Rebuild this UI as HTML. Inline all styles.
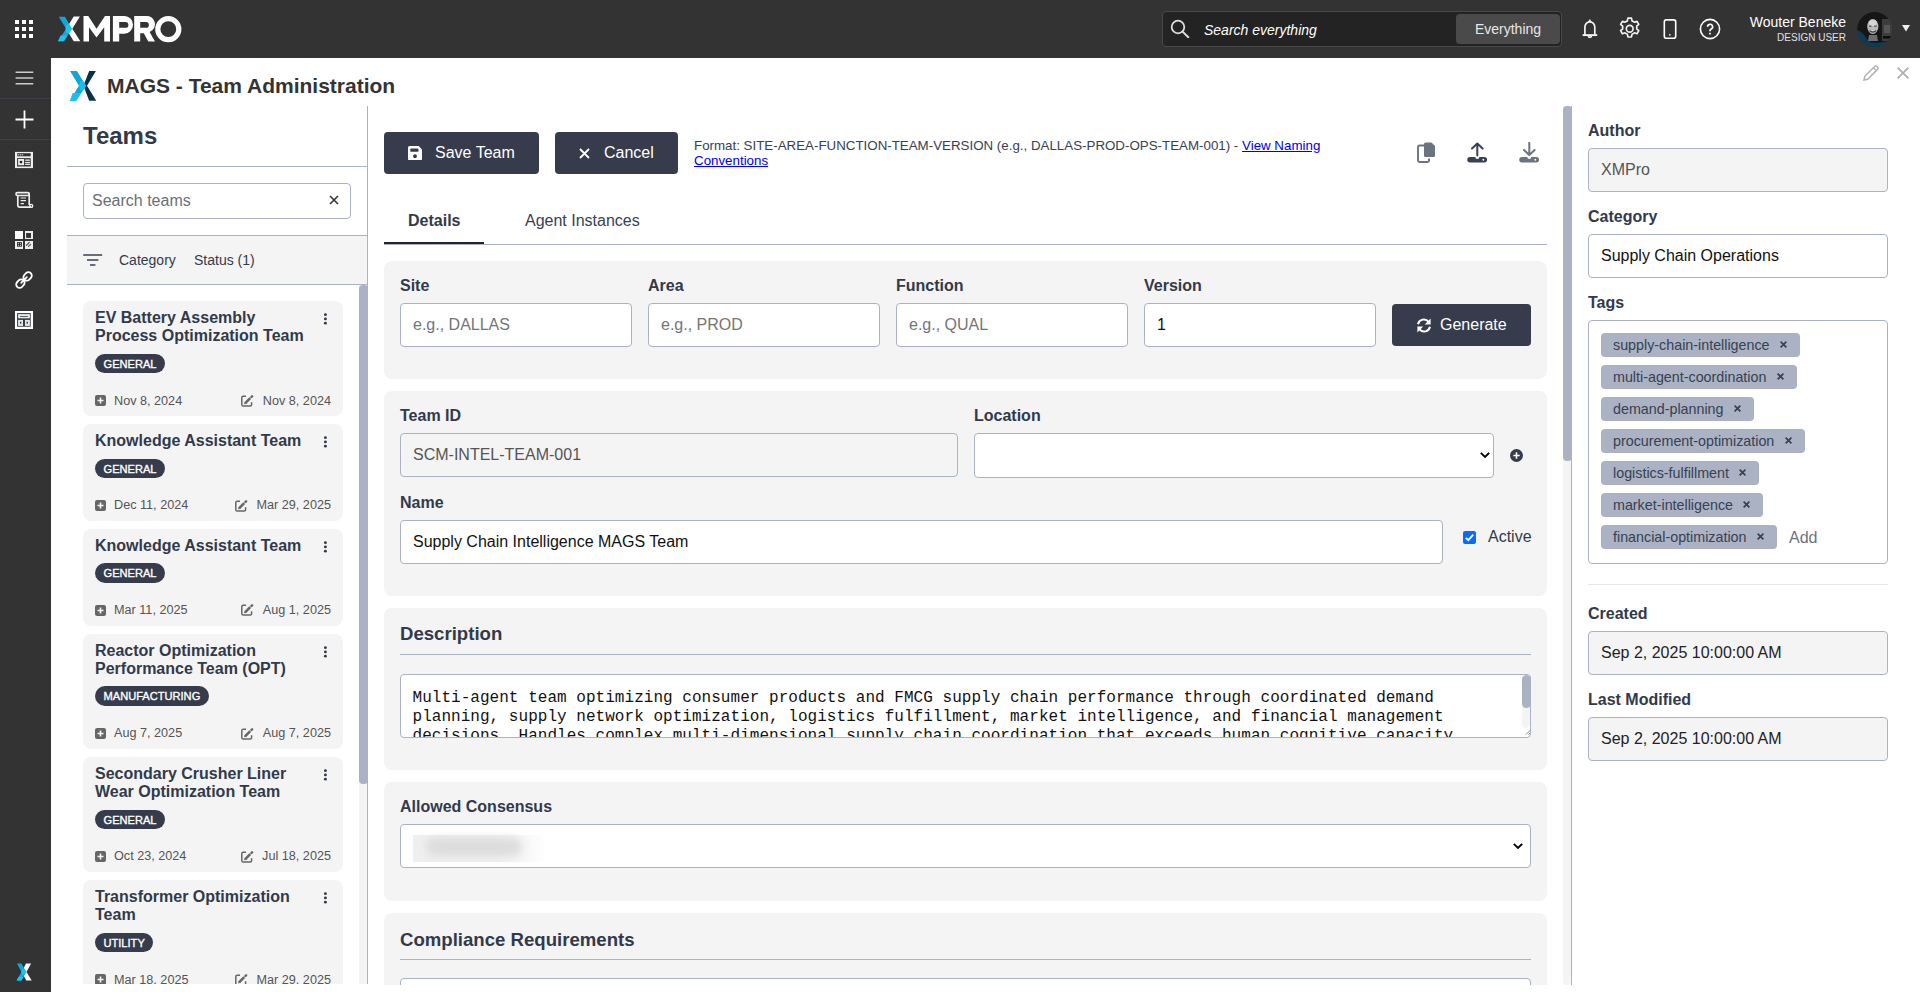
<!DOCTYPE html>
<html><head><meta charset="utf-8">
<style>
*{box-sizing:border-box;margin:0;padding:0}
html,body{width:1920px;height:992px;overflow:hidden;background:#fff;font-family:"Liberation Sans",sans-serif;color:#313a4b}
.abs{position:absolute}
#top{position:absolute;left:0;top:0;width:1920px;height:58px;background:#333}
#side{position:absolute;left:0;top:58px;width:51px;height:934px;background:#333}
.sep{position:absolute;left:0;width:51px;height:1px;background:#3b4048}
.lbl{position:absolute;font-size:16px;font-weight:bold;color:#313a4b;white-space:nowrap;line-height:18px}
.inp{position:absolute;height:44px;border:1px solid #aab2c3;border-radius:4px;background:#fff;font-size:16px;line-height:42px;padding-left:12px;white-space:nowrap;overflow:hidden}
.ph{color:#757575}
.panel{position:absolute;left:384px;width:1163px;background:#f4f4f4;border-radius:8px}
.btn{position:absolute;background:#363c4b;color:#fff;border-radius:4px;font-size:16px;white-space:nowrap}
.card{position:absolute;left:83px;width:260px;background:#f4f4f4;border-radius:8px}
.ct{position:absolute;left:12px;top:8px;width:215px;font-size:16px;font-weight:bold;line-height:18.4px;color:#313a4b}
.badge{position:absolute;left:12px;height:19.5px;border-radius:10px;background:#363c4b;color:#fff;font-size:11.1px;line-height:21px;padding:0 8.5px;-webkit-text-stroke:0.35px #fff;letter-spacing:0px}
.dt{position:absolute;font-size:12.65px;line-height:15px;color:#555;white-space:nowrap;margin-top:-0.1px}
.tag{position:absolute;left:1601px;height:24px;background:#aab2c3;border-radius:4px;font-size:14.3px;line-height:24px;color:#374151;padding-left:12px;white-space:nowrap}
.tag b{position:absolute;top:0;font-size:13px;font-weight:bold}
</style></head><body>

<!-- TOP BAR -->
<div id="top">
  <svg class="abs" style="left:14px;top:19px" width="20" height="20" viewBox="0 0 20 20" fill="#fff">
    <rect x="1" y="1" width="4" height="4"/><rect x="8" y="1" width="4" height="4"/><rect x="15" y="1" width="4" height="4"/>
    <rect x="1" y="8" width="4" height="4"/><rect x="8" y="8" width="4" height="4"/><rect x="15" y="8" width="4" height="4"/>
    <rect x="1" y="15" width="4" height="4"/><rect x="8" y="15" width="4" height="4"/><rect x="15" y="15" width="4" height="4"/>
  </svg>
  <svg class="abs" style="left:50px;top:10px" width="140" height="40" viewBox="50 10 140 40">
    <polygon points="73.7,16.6 79.9,16.6 72.3,28.7 80.3,41.2 73.7,41.2 66.2,28.7" fill="#fff"/>
    <polygon points="58.75,16.8 64.95,16.8 71.9,28.7 63.85,41.2 58,41.2 66.1,28.7" fill="#10a7db"/>
    <polygon points="66.6,24.5 69.3,24.5 71.9,28.7 69.3,32.9 66.6,32.9 65.4,28.7" fill="#1cc4ee"/>
    <polygon points="60.5,35.5 67.4,35.5 63.85,41.2 58,41.2" fill="#1cc4ee"/>
    <polygon points="83.5,41.6 83.5,16 88.3,16 96.5,28.7 105,16 110,16 110,41.6 104.2,41.6 104.2,27.2 96.5,37.6 89,27.2 89,41.6" fill="#fff"/>
    <path fill-rule="evenodd" fill="#fff" d="M112.9,41.6 V16 H124.5 A8.5,8.85 0 0 1 124.5,33.7 H119.2 V41.6 Z M119.2,22 H125.5 A2.9,2.9 0 0 1 125.5,27.8 H119.2 Z"/>
    <path fill-rule="evenodd" fill="#fff" d="M134.2,41.6 V16 H145.5 A8.25,8.3 0 0 1 149.6,32 L155,41.6 H148.3 L143.75,33.25 H140.2 V41.6 Z M140.2,22 H146 A2.9,2.9 0 0 1 146,27.8 H140.2 Z"/>
    <circle cx="168.3" cy="29.15" r="10.5" fill="none" stroke="#fff" stroke-width="5.2"/>
  </svg>
  <!-- search -->
  <div class="abs" style="left:1162px;top:11px;width:400px;height:36px;background:#232323;border:1px solid #484848;border-radius:4px"></div>
  <svg class="abs" style="left:1170px;top:19.3px" width="20" height="19" viewBox="0 0 20 19"><circle cx="8" cy="8" r="6.3" fill="none" stroke="#ddd" stroke-width="1.8"/><path d="M12.6,12.6 L18.3,18.2" stroke="#ddd" stroke-width="2" stroke-linecap="round"/></svg>
  <div class="abs" style="left:1204px;top:21.5px;font-size:14px;font-style:italic;color:#fff;line-height:16px">Search everything</div>
  <div class="abs" style="left:1456px;top:14px;width:104px;height:30px;background:#4a4a4a;border-radius:4px;color:#e6e6e6;font-size:14px;line-height:30px;text-align:center">Everything</div>
  <!-- bell -->
  <svg class="abs" style="left:1580px;top:18px" width="20" height="22" viewBox="0 0 20 22" fill="none" stroke="#f2f2f2" stroke-width="1.7"><path d="M4.9,17 V9 A4.95,5.2 0 0 1 14.8,9 V17"/><path d="M2.6,17.1 H17.2" stroke-width="1.9"/><path d="M8.3,17.8 a1.6,1.6 0 0 0 3.2,0"/><path d="M9.85,1.6 L11.2,3.9 H8.5 Z" fill="#f2f2f2" stroke-width="0.8"/></svg>
  <!-- gear -->
  <svg class="abs" style="left:1617.3px;top:16px" width="25.4" height="25.4" viewBox="0 0 24 24" fill="none" stroke="#f2f2f2" stroke-width="1.55"><path d="M10.3,2 h3.4 l.5,2.6 a8,8 0 0 1 2.2,1.3 l2.5,-.9 1.7,2.9 -2,1.7 a8,8 0 0 1 0,2.6 l2,1.7 -1.7,2.9 -2.5,-.9 a8,8 0 0 1 -2.2,1.3 l-.5,2.6 h-3.4 l-.5,-2.6 a8,8 0 0 1 -2.2,-1.3 l-2.5,.9 -1.7,-2.9 2,-1.7 a8,8 0 0 1 0,-2.6 l-2,-1.7 1.7,-2.9 2.5,.9 a8,8 0 0 1 2.2,-1.3z" stroke-linejoin="round"/><circle cx="12" cy="12" r="3.2"/></svg>
  <!-- tablet -->
  <svg class="abs" style="left:1662px;top:18px" width="16" height="22" viewBox="0 0 16 22" fill="none" stroke="#fff" stroke-width="1.6"><rect x="2.3" y="1.9" width="11.4" height="18.3" rx="2"/><path d="M7,16.8 h1.6" stroke-width="1.3"/></svg>
  <!-- help -->
  <svg class="abs" style="left:1699px;top:18px" width="22" height="22" viewBox="0 0 22 22" fill="none" stroke="#fff" stroke-width="1.6"><circle cx="11" cy="11" r="9.6"/><path d="M8.6,8.8 a2.5,2.5 0 1 1 3.6,2.2 c-.8,.4 -1.2,.9 -1.2,1.9 v.4" stroke-width="1.7"/><rect x="10.1" y="14.8" width="1.8" height="1.6" fill="#fff" stroke="none"/></svg>
  <div class="abs" style="left:1700px;top:14px;width:146px;text-align:right;font-size:14px;color:#fff;line-height:16px">Wouter Beneke</div>
  <div class="abs" style="left:1700px;top:32px;width:146px;text-align:right;font-size:10px;color:#e0e0e0;line-height:11px">DESIGN USER</div>
  <svg class="abs" style="left:1857px;top:12px" width="36" height="36" viewBox="0 0 36 36"><defs><clipPath id="avc"><circle cx="17.6" cy="17.6" r="17.5"/></clipPath><filter id="avb"><feGaussianBlur stdDeviation="0.6"/></filter></defs>
<g clip-path="url(#avc)" filter="url(#avb)"><rect width="36" height="36" fill="#141414"/><rect x="25" y="7" width="11" height="22" fill="#3c3c3c"/><rect x="27" y="13" width="6" height="8" fill="#575757"/><rect x="26" y="24" width="9" height="2.5" fill="#0d0d0d"/><path d="M0,18 C5,19 8,24 11,28.5 C15,31.5 22,31 30,29 L30,36 H0 Z" fill="#0b3a52"/><ellipse cx="15.8" cy="14.5" rx="5.6" ry="7.6" fill="#b8b8b8"/><ellipse cx="15.8" cy="11" rx="4" ry="3" fill="#d6d6d6"/><rect x="12" y="13.5" width="2.5" height="1.3" fill="#555"/><rect x="17.2" y="13.5" width="2.5" height="1.3" fill="#555"/><path d="M12.5,18.5 Q15.8,21.5 19.2,18.5" stroke="#444" stroke-width="1.3" fill="#eee"/><path d="M12,23 L20,23 L21,29 L11,29 Z" fill="#6e6e6e"/></g></svg>
  <svg class="abs" style="left:1902px;top:25px" width="8" height="7" viewBox="0 0 8 7"><polygon points="0,0 8,0 4,6.5" fill="#eee"/></svg>
</div>

<!-- SIDEBAR -->
<div id="side">
  <div class="sep" style="top:40px"></div>
  <div class="sep" style="top:81px"></div>
  <svg class="abs" style="left:15px;top:13px" width="19" height="14" viewBox="0 0 19 14" stroke="#ccc" stroke-width="1.6"><path d="M0.6,1.2 H18.3 M0.6,7 H18.3 M0.6,12.8 H18.3"/></svg>
  <svg class="abs" style="left:15px;top:52px" width="19" height="19" viewBox="0 0 19 19" stroke="#fff" stroke-width="1.8"><path d="M9.5,0.5 V18.5 M0.5,9.5 H18.5"/></svg>
  <svg class="abs" style="left:13px;top:91px" width="22" height="22" viewBox="0 0 22 22"><rect x="2" y="2.9" width="18" height="16.2" fill="#eee"/><rect x="4.1" y="4.2" width="13.6" height="3.1" fill="#333"/><rect x="4.5" y="5.1" width="1.4" height="1.4" fill="#bbb"/><rect x="6.6" y="5.1" width="1.4" height="1.4" fill="#bbb"/><rect x="8.7" y="5.1" width="1.4" height="1.4" fill="#bbb"/><rect x="4.1" y="9.1" width="13.6" height="8.4" fill="#333"/><rect x="5.1" y="10" width="6" height="6.2" fill="#eee"/><circle cx="8" cy="13.1" r="1.4" fill="#222"/><rect x="12.2" y="10.4" width="4.7" height="1.6" fill="#ccc"/><rect x="12.2" y="12.9" width="4.7" height="1.3" fill="#eee"/><rect x="12.2" y="14.9" width="4.7" height="1.1" fill="#eee"/></svg>
  <svg class="abs" style="left:13px;top:131px" width="22" height="22" viewBox="0 0 22 22" fill="none" stroke="#eee"><rect x="3" y="3.6" width="13.2" height="2.9" rx="1.4" stroke-width="1.7"/><path d="M4.8,7.1 V16.3 a1.9,1.9 0 0 0 1.9,1.9 H18.3" stroke-width="1.7"/><path d="M16.2,4.5 V16" stroke-width="1.7"/><circle cx="18.2" cy="16.9" r="1.5" stroke-width="1.4"/><path d="M7.6,9 H13 M7.6,11.65 H13 M7.6,14.55 H10.9" stroke-width="1.2"/></svg>
  <svg class="abs" style="left:13px;top:171px" width="22" height="22" viewBox="0 0 22 22"><rect x="2" y="2" width="8" height="8" fill="#fff"/><rect x="12" y="2" width="8" height="8" fill="#eee"/><rect x="13.1" y="4" width="4.9" height="4.9" fill="#333"/><rect x="2" y="12" width="8" height="8" fill="#eee"/><rect x="4" y="13.1" width="4.9" height="4.6" fill="#333"/><rect x="4.9" y="14.1" width="1.1" height="1" fill="#bbb"/><rect x="6.9" y="14.1" width="1.1" height="1" fill="#bbb"/><rect x="4.9" y="15.9" width="1.1" height="1" fill="#bbb"/><rect x="6.9" y="15.9" width="1.1" height="1" fill="#bbb"/><rect x="12" y="12" width="8" height="8" fill="#eee"/><path d="M13.5,16.2 L16.3,13.4 M15.6,17.4 L17.6,15.4" stroke="#555" stroke-width="1.3" stroke-linecap="round"/></svg>
  <svg class="abs" style="left:15px;top:213px" width="18" height="18" viewBox="0 0 18 18" stroke-linecap="round"><path d="M4.6,13.4 L6.2,11.8 M11.8,6.2 L13.4,4.6" stroke="#fff" stroke-width="8.6"/><path d="M4.6,13.4 L6.2,11.8 M11.8,6.2 L13.4,4.6" stroke="#333" stroke-width="5"/><path d="M6.2,11.8 L11.8,6.2" stroke="#fff" stroke-width="1.8"/></svg>
  <svg class="abs" style="left:13px;top:251px" width="22" height="22" viewBox="0 0 22 22"><rect x="2" y="2" width="18" height="18" fill="#fff"/><rect x="4.1" y="4.1" width="13.6" height="13.6" fill="#363a40"/><rect x="5.1" y="5.1" width="11.8" height="4.2" fill="#e6e8ee"/><rect x="7.1" y="7" width="7.8" height="0.9" fill="#555"/><rect x="5.1" y="10.9" width="4.9" height="6" fill="#e6e8ee"/><rect x="12" y="10.9" width="4.9" height="6" fill="#e6e8ee"/><rect x="7" y="12.7" width="1.3" height="2" fill="#333"/><rect x="13.6" y="12.7" width="1.3" height="2" fill="#333"/></svg>
  <svg class="abs" style="left:16px;top:905px" width="16" height="18" viewBox="16 963 16 18">
    <polygon points="26,963.6 31.1,963.6 26.5,972 31.7,980.4 26.3,980.4 21.7,972" fill="#fff"/>
    <polygon points="17,963.6 21.4,963.6 26.3,972 21.3,980.4 16.6,980.4 21.5,972" fill="#10a7db"/>
    <polygon points="22,969.5 24.8,969.5 26.3,972 24.8,974.5 22,974.5 21.5,972" fill="#1cc4ee"/>
    <polygon points="18.5,977 23.4,977 21.3,980.4 16.6,980.4" fill="#1cc4ee"/>
  </svg>
</div>

<!-- PAGE HEADER -->
<svg class="abs" style="left:69px;top:70px" width="29" height="32" viewBox="69 70 29 32">
  <polygon points="89.2,71 95.9,71 87,85.76 96.25,100.7 89.2,100.7 83.35,85.76" fill="#0a3247"/>
  <polygon points="70.05,71 76.9,71 86,85.76 76.1,100.7 69.85,100.7 78.9,85.76" fill="#0ea5d8"/>
  <polygon points="80.5,81 83.3,81 86,85.76 83.2,90.5 80.2,90.5 78.9,85.76" fill="#19c1ea"/>
  <polygon points="72.7,93 80.9,93 76.1,100.7 69.85,100.7" fill="#19c1ea"/>
</svg>
<div class="abs" style="left:107px;top:74px;font-size:21px;font-weight:bold;color:#333;line-height:24px;white-space:nowrap">MAGS - Team Administration</div>
<svg class="abs" style="left:1862px;top:64px" width="18" height="18" viewBox="0 0 18 18" fill="none" stroke="#b3b3b3" stroke-width="1.5"><path d="M2,16 L2.8,12.3 L12.6,2.5 a1.6,1.6 0 0 1 2.5,0 l0.4,0.4 a1.6,1.6 0 0 1 0,2.5 L5.7,15.2 Z M11.3,3.8 L14.2,6.7"/></svg>
<svg class="abs" style="left:1896px;top:66px" width="14" height="14" viewBox="0 0 14 14" stroke="#b0b0b0" stroke-width="1.9"><path d="M1.6,1.6 L12.4,12.4 M12.4,1.6 L1.6,12.4"/></svg>


<!-- LEFT PANEL -->
<div class="abs" style="left:367px;top:106px;width:1px;height:878px;background:#aab2c3"></div>
<div class="abs" style="left:83px;top:122px;font-size:24px;font-weight:bold;line-height:28px;color:#313a4b">Teams</div>
<div class="abs" style="left:67px;top:166px;width:300px;height:1px;background:#aab2c3"></div>
<div class="abs" style="left:83px;top:183px;width:268px;height:36px;border:1px solid #aab2c3;border-radius:4px;background:#fff"></div>
<div class="abs" style="left:92px;top:192px;font-size:16px;line-height:18px;color:#6b6f76">Search teams</div>
<svg class="abs" style="left:329px;top:195px" width="10" height="10" viewBox="0 0 10 10" stroke="#333" stroke-width="1.6"><path d="M1,1 L9,9 M9,1 L1,9"/></svg>
<div class="abs" style="left:67px;top:235px;width:300px;height:50px;background:#f4f4f4;border-top:1px solid #aab2c3;border-bottom:1px solid #aab2c3"></div>
<svg class="abs" style="left:83px;top:253px" width="20" height="14" viewBox="0 0 20 14" stroke="#3a4150" stroke-width="1.7"><path d="M0.2,2 H19.2 M4,7 H15.4 M7,12 H12.4"/></svg>
<div class="abs" style="left:119px;top:252px;font-size:14px;line-height:16px;color:#333b4b">Category</div>
<div class="abs" style="left:194px;top:252px;font-size:14px;line-height:16px;color:#333b4b">Status (1)</div>
<div class="abs" style="left:359px;top:285px;width:8px;height:699px;background:#f4f4f4"></div>
<div class="abs" style="left:359px;top:285px;width:8.5px;height:499px;background:#aab2c3;border-radius:4px"></div>
<div class="abs" style="left:67px;top:285px;width:292px;height:699px;overflow:hidden">
<div class="card" style="left:16px;top:16.00px;height:115.16px">
  <div class="ct">EV Battery Assembly Process Optimization Team</div>
  <svg class="abs" style="left:240px;top:11px" width="6" height="14" viewBox="0 0 6 14" fill="#313a4b"><circle cx="2.4" cy="2.65" r="1.45"/><circle cx="2.4" cy="6.9" r="1.45"/><circle cx="2.4" cy="11.15" r="1.45"/></svg>
  <div class="badge" style="top:52.80px">GENERAL</div>
  <svg class="abs" style="left:12px;top:94.20px" width="11" height="11" viewBox="0 0 11 11"><rect x="0" y="0" width="11" height="11" rx="2" fill="#666"/><path d="M5.5,2.5 V8.5 M2.5,5.5 H8.5" stroke="#f4f4f4" stroke-width="1.6"/></svg>
  <div class="dt" style="left:31px;top:92.70px">Nov 8, 2024</div>
  <div class="dt" style="right:12px;top:92.70px;display:flex;align-items:center"><svg style="margin-right:8.5px;margin-top:-0.5px" width="13" height="12" viewBox="0 0 13 12" fill="none" stroke="#666"><path d="M5,1.3 H2.2 a1.4,1.4 0 0 0 -1.4,1.4 V9.7 a1.4,1.4 0 0 0 1.4,1.4 H9.2 a1.4,1.4 0 0 0 1.4,-1.4 V7.3" stroke-width="1.5"/><path d="M4.3,8.1 L9.2,3.2" stroke-width="2.6"/><path d="M3.4,9 L3.9,7.2 L5.2,8.5 Z" fill="#666" stroke-width="0.6"/><path d="M10.4,2 L11.1,1.3" stroke-width="2.4" stroke-linecap="round"/></svg>Nov 8, 2024</div>
</div>
<div class="card" style="left:16px;top:139.16px;height:96.76px">
  <div class="ct">Knowledge Assistant Team</div>
  <svg class="abs" style="left:240px;top:11px" width="6" height="14" viewBox="0 0 6 14" fill="#313a4b"><circle cx="2.4" cy="2.65" r="1.45"/><circle cx="2.4" cy="6.9" r="1.45"/><circle cx="2.4" cy="11.15" r="1.45"/></svg>
  <div class="badge" style="top:34.40px">GENERAL</div>
  <svg class="abs" style="left:12px;top:75.80px" width="11" height="11" viewBox="0 0 11 11"><rect x="0" y="0" width="11" height="11" rx="2" fill="#666"/><path d="M5.5,2.5 V8.5 M2.5,5.5 H8.5" stroke="#f4f4f4" stroke-width="1.6"/></svg>
  <div class="dt" style="left:31px;top:74.30px">Dec 11, 2024</div>
  <div class="dt" style="right:12px;top:74.30px;display:flex;align-items:center"><svg style="margin-right:8.5px;margin-top:-0.5px" width="13" height="12" viewBox="0 0 13 12" fill="none" stroke="#666"><path d="M5,1.3 H2.2 a1.4,1.4 0 0 0 -1.4,1.4 V9.7 a1.4,1.4 0 0 0 1.4,1.4 H9.2 a1.4,1.4 0 0 0 1.4,-1.4 V7.3" stroke-width="1.5"/><path d="M4.3,8.1 L9.2,3.2" stroke-width="2.6"/><path d="M3.4,9 L3.9,7.2 L5.2,8.5 Z" fill="#666" stroke-width="0.6"/><path d="M10.4,2 L11.1,1.3" stroke-width="2.4" stroke-linecap="round"/></svg>Mar 29, 2025</div>
</div>
<div class="card" style="left:16px;top:243.92px;height:96.76px">
  <div class="ct">Knowledge Assistant Team</div>
  <svg class="abs" style="left:240px;top:11px" width="6" height="14" viewBox="0 0 6 14" fill="#313a4b"><circle cx="2.4" cy="2.65" r="1.45"/><circle cx="2.4" cy="6.9" r="1.45"/><circle cx="2.4" cy="11.15" r="1.45"/></svg>
  <div class="badge" style="top:34.40px">GENERAL</div>
  <svg class="abs" style="left:12px;top:75.80px" width="11" height="11" viewBox="0 0 11 11"><rect x="0" y="0" width="11" height="11" rx="2" fill="#666"/><path d="M5.5,2.5 V8.5 M2.5,5.5 H8.5" stroke="#f4f4f4" stroke-width="1.6"/></svg>
  <div class="dt" style="left:31px;top:74.30px">Mar 11, 2025</div>
  <div class="dt" style="right:12px;top:74.30px;display:flex;align-items:center"><svg style="margin-right:8.5px;margin-top:-0.5px" width="13" height="12" viewBox="0 0 13 12" fill="none" stroke="#666"><path d="M5,1.3 H2.2 a1.4,1.4 0 0 0 -1.4,1.4 V9.7 a1.4,1.4 0 0 0 1.4,1.4 H9.2 a1.4,1.4 0 0 0 1.4,-1.4 V7.3" stroke-width="1.5"/><path d="M4.3,8.1 L9.2,3.2" stroke-width="2.6"/><path d="M3.4,9 L3.9,7.2 L5.2,8.5 Z" fill="#666" stroke-width="0.6"/><path d="M10.4,2 L11.1,1.3" stroke-width="2.4" stroke-linecap="round"/></svg>Aug 1, 2025</div>
</div>
<div class="card" style="left:16px;top:348.68px;height:115.16px">
  <div class="ct">Reactor Optimization Performance Team (OPT)</div>
  <svg class="abs" style="left:240px;top:11px" width="6" height="14" viewBox="0 0 6 14" fill="#313a4b"><circle cx="2.4" cy="2.65" r="1.45"/><circle cx="2.4" cy="6.9" r="1.45"/><circle cx="2.4" cy="11.15" r="1.45"/></svg>
  <div class="badge" style="top:52.80px">MANUFACTURING</div>
  <svg class="abs" style="left:12px;top:94.20px" width="11" height="11" viewBox="0 0 11 11"><rect x="0" y="0" width="11" height="11" rx="2" fill="#666"/><path d="M5.5,2.5 V8.5 M2.5,5.5 H8.5" stroke="#f4f4f4" stroke-width="1.6"/></svg>
  <div class="dt" style="left:31px;top:92.70px">Aug 7, 2025</div>
  <div class="dt" style="right:12px;top:92.70px;display:flex;align-items:center"><svg style="margin-right:8.5px;margin-top:-0.5px" width="13" height="12" viewBox="0 0 13 12" fill="none" stroke="#666"><path d="M5,1.3 H2.2 a1.4,1.4 0 0 0 -1.4,1.4 V9.7 a1.4,1.4 0 0 0 1.4,1.4 H9.2 a1.4,1.4 0 0 0 1.4,-1.4 V7.3" stroke-width="1.5"/><path d="M4.3,8.1 L9.2,3.2" stroke-width="2.6"/><path d="M3.4,9 L3.9,7.2 L5.2,8.5 Z" fill="#666" stroke-width="0.6"/><path d="M10.4,2 L11.1,1.3" stroke-width="2.4" stroke-linecap="round"/></svg>Aug 7, 2025</div>
</div>
<div class="card" style="left:16px;top:471.84px;height:115.16px">
  <div class="ct">Secondary Crusher Liner Wear Optimization Team</div>
  <svg class="abs" style="left:240px;top:11px" width="6" height="14" viewBox="0 0 6 14" fill="#313a4b"><circle cx="2.4" cy="2.65" r="1.45"/><circle cx="2.4" cy="6.9" r="1.45"/><circle cx="2.4" cy="11.15" r="1.45"/></svg>
  <div class="badge" style="top:52.80px">GENERAL</div>
  <svg class="abs" style="left:12px;top:94.20px" width="11" height="11" viewBox="0 0 11 11"><rect x="0" y="0" width="11" height="11" rx="2" fill="#666"/><path d="M5.5,2.5 V8.5 M2.5,5.5 H8.5" stroke="#f4f4f4" stroke-width="1.6"/></svg>
  <div class="dt" style="left:31px;top:92.70px">Oct 23, 2024</div>
  <div class="dt" style="right:12px;top:92.70px;display:flex;align-items:center"><svg style="margin-right:8.5px;margin-top:-0.5px" width="13" height="12" viewBox="0 0 13 12" fill="none" stroke="#666"><path d="M5,1.3 H2.2 a1.4,1.4 0 0 0 -1.4,1.4 V9.7 a1.4,1.4 0 0 0 1.4,1.4 H9.2 a1.4,1.4 0 0 0 1.4,-1.4 V7.3" stroke-width="1.5"/><path d="M4.3,8.1 L9.2,3.2" stroke-width="2.6"/><path d="M3.4,9 L3.9,7.2 L5.2,8.5 Z" fill="#666" stroke-width="0.6"/><path d="M10.4,2 L11.1,1.3" stroke-width="2.4" stroke-linecap="round"/></svg>Jul 18, 2025</div>
</div>
<div class="card" style="left:16px;top:595.00px;height:115.16px">
  <div class="ct">Transformer Optimization Team</div>
  <svg class="abs" style="left:240px;top:11px" width="6" height="14" viewBox="0 0 6 14" fill="#313a4b"><circle cx="2.4" cy="2.65" r="1.45"/><circle cx="2.4" cy="6.9" r="1.45"/><circle cx="2.4" cy="11.15" r="1.45"/></svg>
  <div class="badge" style="top:52.80px">UTILITY</div>
  <svg class="abs" style="left:12px;top:94.20px" width="11" height="11" viewBox="0 0 11 11"><rect x="0" y="0" width="11" height="11" rx="2" fill="#666"/><path d="M5.5,2.5 V8.5 M2.5,5.5 H8.5" stroke="#f4f4f4" stroke-width="1.6"/></svg>
  <div class="dt" style="left:31px;top:92.70px">Mar 18, 2025</div>
  <div class="dt" style="right:12px;top:92.70px;display:flex;align-items:center"><svg style="margin-right:8.5px;margin-top:-0.5px" width="13" height="12" viewBox="0 0 13 12" fill="none" stroke="#666"><path d="M5,1.3 H2.2 a1.4,1.4 0 0 0 -1.4,1.4 V9.7 a1.4,1.4 0 0 0 1.4,1.4 H9.2 a1.4,1.4 0 0 0 1.4,-1.4 V7.3" stroke-width="1.5"/><path d="M4.3,8.1 L9.2,3.2" stroke-width="2.6"/><path d="M3.4,9 L3.9,7.2 L5.2,8.5 Z" fill="#666" stroke-width="0.6"/><path d="M10.4,2 L11.1,1.3" stroke-width="2.4" stroke-linecap="round"/></svg>Mar 29, 2025</div>
</div>

</div>

<!-- MAIN -->
<div class="abs" style="left:1571px;top:106px;width:1px;height:879px;background:#aab2c3"></div>
<div class="abs" style="left:1563px;top:106px;width:8px;height:879px;background:#f4f4f4;border-radius:0 0 4px 4px"></div>
<div class="abs" style="left:1563px;top:106px;width:8.5px;height:354.5px;background:#aab2c3;border-radius:4px 4px 4px 4px"></div>

<div class="btn" style="left:384px;top:132px;width:155px;height:42px"></div>
<svg class="abs" style="left:408px;top:146px" width="14" height="14.4" viewBox="0 0 14 14.4"><path fill-rule="evenodd" fill="#fff" d="M1.6,0 H10.6 L14,3.4 V12.8 a1.6,1.6 0 0 1 -1.6,1.6 H1.6 A1.6,1.6 0 0 1 0,12.8 V1.6 A1.6,1.6 0 0 1 1.6,0 Z M3.2,2.4 H9.6 a0.9,0.9 0 0 1 0.9,0.9 V4.9 a0.9,0.9 0 0 1 -0.9,0.9 H3.2 a0.9,0.9 0 0 1 -0.9,-0.9 V3.3 a0.9,0.9 0 0 1 0.9,-0.9 Z M7,8.3 a1.9,1.9 0 1 0 0.01,0 Z"/></svg>
<div class="abs" style="left:435px;top:144px;font-size:16px;line-height:18px;color:#fff;white-space:nowrap">Save Team</div>
<div class="btn" style="left:555px;top:132px;width:123px;height:42px"></div>
<svg class="abs" style="left:579px;top:147.5px" width="11" height="11" viewBox="0 0 11 11" stroke="#fff" stroke-width="1.8"><path d="M1,1 L10,10 M10,1 L1,10"/></svg>
<div class="abs" style="left:604px;top:144px;font-size:16px;line-height:18px;color:#fff;white-space:nowrap">Cancel</div>
<div class="abs" style="left:694px;top:137.5px;font-size:13.33px;line-height:15px;color:#374151;white-space:nowrap">Format: SITE-AREA-FUNCTION-TEAM-VERSION (e.g., DALLAS-PROD-OPS-TEAM-001) - <span style="color:#0000ee;text-decoration:underline">View Naming</span><br><span style="color:#0000ee;text-decoration:underline">Conventions</span></div>
<svg class="abs" style="left:1417px;top:142px" width="19" height="21" viewBox="0 0 19 21"><path d="M7,3.5 H2.5 a1.5,1.5 0 0 0 -1.5,1.5 V18.5 a1.5,1.5 0 0 0 1.5,1.5 H10.5 a1.5,1.5 0 0 0 1.5,-1.5 V16.5" fill="none" stroke="#6b7280" stroke-width="1.9"/><path d="M8.5,0.5 H14.5 L18,4 V13.5 a1.5,1.5 0 0 1 -1.5,1.5 H8.5 a1.5,1.5 0 0 1 -1.5,-1.5 V2 a1.5,1.5 0 0 1 1.5,-1.5 Z" fill="#6b7280"/></svg>
<svg class="abs" style="left:1467px;top:142px" width="21" height="21" viewBox="0 0 21 21"><path d="M10.3,1.5 V13.5 M5,6.5 L10.3,1.5 L15.6,6.5" fill="none" stroke="#374151" stroke-width="2" stroke-linecap="round" stroke-linejoin="round"/><path d="M3,15 H8.3 a2,2 0 0 0 4,0 H17.3 a2.75,2.75 0 0 1 0,5.5 H3 a2.75,2.75 0 0 1 0,-5.5 Z" fill="#374151"/><circle cx="16.3" cy="17.75" r="0.9" fill="#fff"/></svg>
<svg class="abs" style="left:1519px;top:142px" width="21" height="21" viewBox="0 0 21 21"><path d="M10.3,0.8 V13 M5,8 L10.3,13 L15.6,8" fill="none" stroke="#6b7280" stroke-width="2" stroke-linecap="round" stroke-linejoin="round"/><path d="M3,15 H8.3 a2,2 0 0 0 4,0 H17.3 a2.75,2.75 0 0 1 0,5.5 H3 a2.75,2.75 0 0 1 0,-5.5 Z" fill="#6b7280"/><circle cx="16.3" cy="17.75" r="0.9" fill="#fff"/></svg>

<!-- tabs -->
<div class="abs" style="left:384px;top:244px;width:1163px;height:1px;background:#aab2c3"></div>
<div class="abs" style="left:384px;top:242px;width:100px;height:2px;background:#1e2637"></div>
<div class="abs" style="left:408px;top:211.5px;font-size:16px;font-weight:bold;line-height:18px;color:#313a4b">Details</div>
<div class="abs" style="left:525px;top:211.5px;font-size:16px;line-height:18px;color:#374151">Agent Instances</div>

<!-- panel 1 -->
<div class="panel" style="top:261px;height:118px"></div>
<div class="lbl" style="left:400px;top:277.3px;">Site</div>
<div class="lbl" style="left:648px;top:277.3px;">Area</div>
<div class="lbl" style="left:896px;top:277.3px;">Function</div>
<div class="lbl" style="left:1144px;top:277.3px;">Version</div>
<div class="inp" style="left:400px;top:303px;width:232px;color:#757575">e.g., DALLAS</div>
<div class="inp" style="left:648px;top:303px;width:232px;color:#757575">e.g., PROD</div>
<div class="inp" style="left:896px;top:303px;width:232px;color:#757575">e.g., QUAL</div>
<div class="inp" style="left:1144px;top:303px;width:232px;color:#111">1</div>
<div class="btn" style="left:1392px;top:304px;width:139px;height:42px"></div>
<svg class="abs" style="left:1416px;top:317.5px" width="16" height="15" viewBox="0 0 16 15" fill="none" stroke="#fff" stroke-width="2"><path d="M2,6.2 A6,6 0 0 1 12.6,3.8"/><path d="M14,8.8 A6,6 0 0 1 3.4,11.2"/><path d="M14.6,0.6 V6.4 H8.8 Z" fill="#fff" stroke="none"/><path d="M1.4,14.4 V8.6 H7.2 Z" fill="#fff" stroke="none"/></svg>
<div class="abs" style="left:1440px;top:316px;font-size:16px;line-height:18px;color:#fff">Generate</div>

<!-- panel 2 -->
<div class="panel" style="top:391px;height:205px"></div>
<div class="lbl" style="left:400px;top:406.8px;">Team ID</div>
<div class="lbl" style="left:974px;top:406.8px;">Location</div>
<div class="lbl" style="left:400px;top:493.8px;">Name</div>
<div class="inp" style="left:400px;top:433px;width:558px;background:#f4f4f4;color:#555">SCM-INTEL-TEAM-001</div>
<div class="inp" style="left:974px;top:433px;width:520px;height:45px"></div>
<svg class="abs" style="left:1480px;top:452px" width="10" height="6.5" viewBox="0 0 10 6.5" fill="none" stroke="#000" stroke-width="1.9"><path d="M0.8,0.8 L5,5 L9.2,0.8"/></svg>
<svg class="abs" style="left:1510px;top:448.5px" width="13" height="13" viewBox="0 0 13 13"><circle cx="6.5" cy="6.5" r="6.5" fill="#363c4b"/><path d="M6.5,3.3 V9.7 M3.3,6.5 H9.7" stroke="#fff" stroke-width="1.6"/></svg>
<div class="inp" style="left:400px;top:520px;width:1043px;color:#111">Supply Chain Intelligence MAGS Team</div>
<svg class="abs" style="left:1463px;top:531px" width="13" height="13" viewBox="0 0 13 13"><rect width="13" height="13" rx="2" fill="#0a6cff"/><path d="M2.8,6.8 L5.3,9.2 L10.2,3.6" fill="none" stroke="#fff" stroke-width="1.8"/></svg>
<div class="abs" style="left:1488px;top:527.5px;font-size:16px;line-height:18px;color:#313a4b">Active</div>

<!-- panel 3 -->
<div class="panel" style="top:608px;height:162px"></div>
<div class="abs" style="left:400px;top:623.5px;font-size:18.6px;font-weight:bold;line-height:20px;color:#313a4b">Description</div>
<div class="abs" style="left:400px;top:654px;width:1131px;height:1px;background:#aab2c3"></div>
<div class="abs" style="left:400px;top:674px;width:1131px;height:64px;border:1px solid #aab2c3;border-radius:4px;background:#fff;overflow:hidden">
  <div style="position:absolute;left:11.5px;top:14px;width:1100px;font-family:'Liberation Mono',monospace;font-size:16px;line-height:18.8px;letter-spacing:0.035px;color:#111;white-space:pre">Multi-agent team optimizing consumer products and FMCG supply chain performance through coordinated demand
planning, supply network optimization, logistics fulfillment, market intelligence, and financial management
decisions. Handles complex multi-dimensional supply chain coordination that exceeds human cognitive capacity</div>
  <div style="position:absolute;left:1121px;top:0px;width:8px;height:53px;background:#f4f4f4;border-radius:0 0 4px 4px"></div>
  <svg style="position:absolute;left:1124px;top:54px" width="6" height="6" viewBox="0 0 6 6" stroke="#666" stroke-width="0.8"><path d="M5.5,1 L1,5.5 M5.5,3.5 L3.5,5.5"/></svg>
</div>
<div class="abs" style="left:1522px;top:674.5px;width:9px;height:33px;background:#aab2c3;border-radius:4.5px"></div>

<!-- panel 4 -->
<div class="panel" style="top:782px;height:118.5px"></div>
<div class="lbl" style="left:400px;top:797.5px;">Allowed Consensus</div>
<div class="inp" style="left:400px;top:824px;width:1131px"></div>
<div class="abs" style="left:413px;top:835px;width:134px;height:27px;background:linear-gradient(90deg,#efefef 0,#efefef 60%,#f6f6f6 80%,#fff 100%)"></div>
<div class="abs" style="left:426px;top:838px;width:96px;height:18px;border-radius:9px;background:#dcdcdc;filter:blur(4px)"></div>
<svg class="abs" style="left:1513px;top:843px" width="10" height="6.5" viewBox="0 0 10 6.5" fill="none" stroke="#000" stroke-width="1.9"><path d="M0.8,0.8 L5,5 L9.2,0.8"/></svg>

<!-- panel 5 (clipped) -->
<div class="abs" style="left:368px;top:900px;width:1195px;height:85px;overflow:hidden">
  <div style="position:absolute;left:16px;top:13px;width:1163px;height:200px;background:#f4f4f4;border-radius:8px"></div>
  <div style="position:absolute;left:32px;top:29.5px;font-size:18.6px;font-weight:bold;line-height:20px;color:#313a4b;white-space:nowrap">Compliance Requirements</div>
  <div style="position:absolute;left:32px;top:59px;width:1131px;height:1px;background:#aab2c3"></div>
  <div style="position:absolute;left:32px;top:78px;width:1131px;height:44px;border:1px solid #aab2c3;border-radius:4px;background:#fff"></div>
</div>

<!-- RIGHT PANEL -->
<div class="lbl" style="left:1588px;top:121.7px;">Author</div>
<div class="inp" style="left:1588px;top:148px;width:300px;background:#f4f4f4;color:#555">XMPro</div>
<div class="lbl" style="left:1588px;top:207.9px;">Category</div>
<div class="inp" style="left:1588px;top:234px;width:300px;color:#111">Supply Chain Operations</div>
<div class="lbl" style="left:1588px;top:293.5px;">Tags</div>
<div class="abs" style="left:1588px;top:320px;width:300px;height:243.5px;border:1px solid #aab2c3;border-radius:4px;background:#fff"></div>
<div class="tag" style="top:333px;width:199px">supply-chain-intelligence<svg style="position:absolute;right:13px;top:7.5px" width="7" height="7" viewBox="0 0 7 7" stroke="#374151" stroke-width="1.7"><path d="M0.6,0.6 L6.4,6.4 M6.4,0.6 L0.6,6.4"/></svg></div>
<div class="tag" style="top:365px;width:196px">multi-agent-coordination<svg style="position:absolute;right:13px;top:7.5px" width="7" height="7" viewBox="0 0 7 7" stroke="#374151" stroke-width="1.7"><path d="M0.6,0.6 L6.4,6.4 M6.4,0.6 L0.6,6.4"/></svg></div>
<div class="tag" style="top:397px;width:153px">demand-planning<svg style="position:absolute;right:13px;top:7.5px" width="7" height="7" viewBox="0 0 7 7" stroke="#374151" stroke-width="1.7"><path d="M0.6,0.6 L6.4,6.4 M6.4,0.6 L0.6,6.4"/></svg></div>
<div class="tag" style="top:429px;width:204px">procurement-optimization<svg style="position:absolute;right:13px;top:7.5px" width="7" height="7" viewBox="0 0 7 7" stroke="#374151" stroke-width="1.7"><path d="M0.6,0.6 L6.4,6.4 M6.4,0.6 L0.6,6.4"/></svg></div>
<div class="tag" style="top:461px;width:158px">logistics-fulfillment<svg style="position:absolute;right:13px;top:7.5px" width="7" height="7" viewBox="0 0 7 7" stroke="#374151" stroke-width="1.7"><path d="M0.6,0.6 L6.4,6.4 M6.4,0.6 L0.6,6.4"/></svg></div>
<div class="tag" style="top:493px;width:162px">market-intelligence<svg style="position:absolute;right:13px;top:7.5px" width="7" height="7" viewBox="0 0 7 7" stroke="#374151" stroke-width="1.7"><path d="M0.6,0.6 L6.4,6.4 M6.4,0.6 L0.6,6.4"/></svg></div>
<div class="tag" style="top:525px;width:176px">financial-optimization<svg style="position:absolute;right:13px;top:7.5px" width="7" height="7" viewBox="0 0 7 7" stroke="#374151" stroke-width="1.7"><path d="M0.6,0.6 L6.4,6.4 M6.4,0.6 L0.6,6.4"/></svg></div>
<div class="abs" style="left:1789px;top:529px;font-size:16px;line-height:18px;color:#6b7280">Add</div>
<div class="abs" style="left:1588px;top:584px;width:300px;height:1px;background:#e8e8e8"></div>
<div class="lbl" style="left:1588px;top:604.7px;">Created</div>
<div class="inp" style="left:1588px;top:631px;width:300px;background:#f4f4f4;color:#222">Sep 2, 2025 10:00:00 AM</div>
<div class="lbl" style="left:1588px;top:690.9px;">Last Modified</div>
<div class="inp" style="left:1588px;top:717px;width:300px;background:#f4f4f4;color:#222">Sep 2, 2025 10:00:00 AM</div>
</body></html>
